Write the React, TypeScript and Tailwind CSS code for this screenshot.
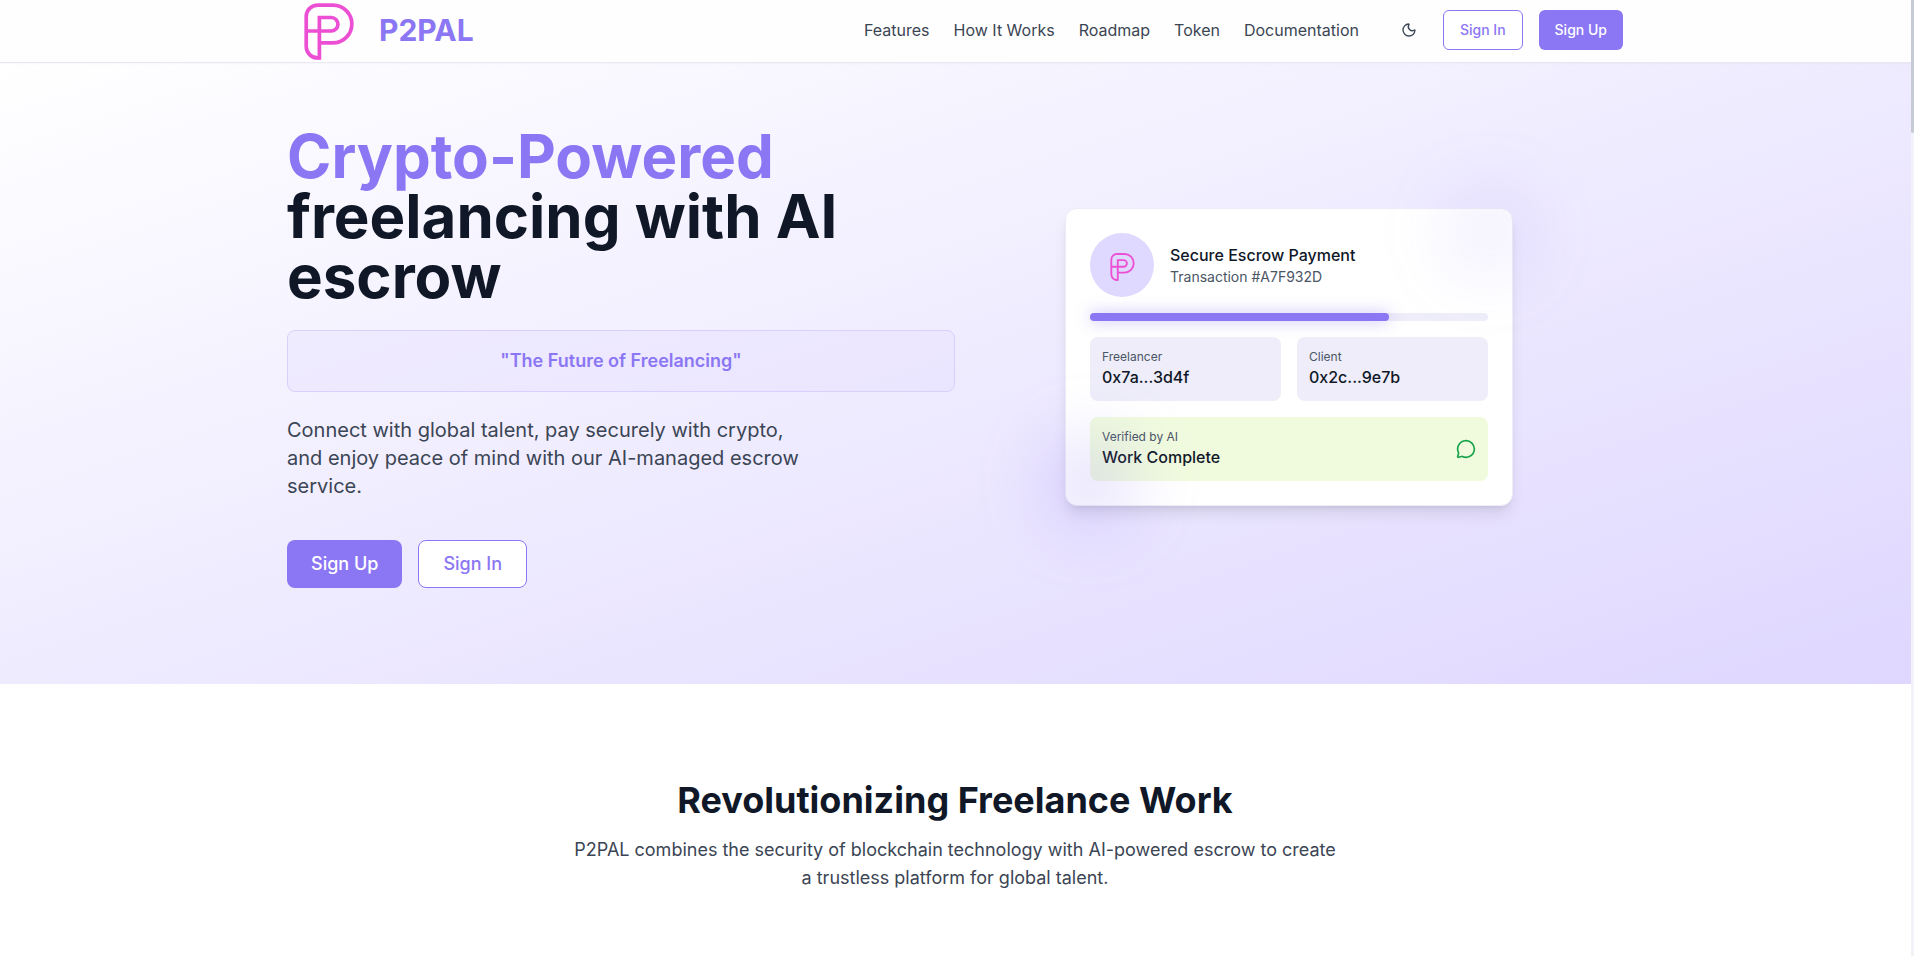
import { MessageCircle, Moon } from "lucide-react";

const navItems = ["Features", "How It Works", "Roadmap", "Token", "Documentation"];

const parties = [
  { label: "Freelancer", value: "0x7a...3d4f" },
  { label: "Client", value: "0x2c...9e7b" },
];

function Logo({ className, stroke = 11 }: { className: string; stroke?: number }) {
  return (
    <svg viewBox="104 12 147 169" className={className} fill="none" stroke="#ec4fd3" strokeWidth={stroke}>
      <path d="M149 130.500H189A56 56 0 0 0 189 18H144A34 34 0 0 0 110 52V141A34 34 0 0 0 144 175H149" />
      <path d="M149 180V55H184A20 20 0 0 1 184 95H110" />
    </svg>
  );
}

function Header() {
  return (
    <header className="relative z-10 h-[63px] shrink-0 border-b border-[#e9e7f1] bg-[#fefefe] shadow-[0_1px_2px_rgba(0,0,0,0.03)]">
      <div className="mx-auto flex h-[60px] w-[1401px] items-center justify-between pl-8 pr-[33px]">
        <div className="flex items-center pl-[17px]">
          <Logo className="mt-[3px] h-[57px] w-[50px]" />
          <span className="ml-[25px] text-3xl font-bold text-[#8b76f4]">P2PAL</span>
        </div>
        <div className="flex items-center">
          <nav className="flex gap-6 text-base text-[#3b4554]">
            {navItems.map((item) => (
              <a key={item}>{item}</a>
            ))}
          </nav>
          <Moon className="ml-[42px] size-4 text-[#3b4554]" />
          <button className="ml-[26px] h-10 rounded-md border border-[#8b76f4] bg-white px-4 text-sm font-medium text-[#8b76f4]">
            Sign In
          </button>
          <button className="ml-4 h-10 rounded-md bg-[#8b76f4] px-4 text-sm font-medium text-white">Sign Up</button>
        </div>
      </div>
    </header>
  );
}

function EscrowCard() {
  return (
    <div className="relative w-[448px]">
      <div className="rounded-xl border border-[#eeecf6] bg-white p-6 shadow-lg">
        <div className="flex items-center gap-4">
          <div className="flex size-16 items-center justify-center rounded-full bg-[#dfd8ff]">
            <Logo className="ml-px mt-[3px] h-7 w-[25px]" />
          </div>
          <div>
            <p className="font-medium text-gray-900">Secure Escrow Payment</p>
            <p className="text-sm text-gray-600">Transaction #A7F932D</p>
          </div>
        </div>
        <div className="mt-4 h-2 rounded-full bg-[#eeedf9]">
          <div className="h-2 w-3/4 rounded-full bg-[#8b76f4] shadow-[0_0_15px_rgba(139,118,244,0.5)]" />
        </div>
        <div className="mt-4 grid grid-cols-2 gap-4">
          {parties.map((party) => (
            <div key={party.label} className="rounded-lg bg-[#eeedf9] p-3">
              <p className="text-xs text-gray-600">{party.label}</p>
              <p className="font-medium text-gray-900">{party.value}</p>
            </div>
          ))}
        </div>
        <div className="mt-4 flex items-center justify-between rounded-lg bg-[#f0fbde] p-3">
          <div>
            <p className="text-xs text-gray-600">Verified by AI</p>
            <p className="font-medium text-gray-900">Work Complete</p>
          </div>
          <MessageCircle className="size-5 text-[#16a34a]" />
        </div>
      </div>
      <div className="absolute -right-6 -top-6 size-24 rounded-full bg-[#8b76f4]/10 blur-[32px]" />
      <div className="absolute -bottom-6 -left-6 size-24 rounded-full bg-[#8b76f4]/20 blur-[32px]" />
    </div>
  );
}

function Hero() {
  return (
    <section className="h-[621px] shrink-0 bg-gradient-to-br from-white to-[#dfd7ff] pt-[63px]">
      <div className="mx-auto grid w-[1401px] grid-cols-2 items-center pl-8 pr-[33px]">
        <div>
          <h1 className="text-6xl font-bold leading-none text-gray-900">
            <span className="text-[#8b76f4]">Crypto-Powered</span>
            <br />
            freelancing with AI escrow
          </h1>
          <div className="mt-6 rounded-lg border border-[#d9d1fb] bg-[#e5deff]/40 p-4 text-center text-lg font-semibold text-[#8b76f4]">
            "The Future of Freelancing"
          </div>
          <p className="mt-6 max-w-[530px] text-xl leading-7 text-[#3b4554]">
            Connect with global talent, pay securely with crypto, and enjoy peace of mind with our AI-managed escrow
            service.
          </p>
          <div className="mt-10 flex gap-4 text-lg font-medium">
            <button className="h-12 rounded-lg bg-[#8b76f4] px-6 text-white">Sign Up</button>
            <button className="h-12 rounded-lg border border-[#8b76f4] bg-white px-6 text-[#8b76f4]">Sign In</button>
          </div>
        </div>
        <div className="flex justify-center">
          <EscrowCard />
        </div>
      </div>
    </section>
  );
}

export default function App() {
  return (
    <div className="flex h-[956px] overflow-hidden bg-white font-['Inter',sans-serif]">
      <div className="flex min-w-0 flex-1 flex-col">
        <Header />
        <Hero />
        <section className="flex flex-1 flex-col items-center pr-px pt-24 text-center">
          <h2 className="text-4xl font-bold text-gray-900">Revolutionizing Freelance Work</h2>
          <p className="mt-4 max-w-3xl text-lg leading-7 text-[#3b4554]">
            P2PAL combines the security of blockchain technology with AI-powered escrow to create a trustless platform
            for global talent.
          </p>
        </section>
      </div>
      <div className="w-[3px] bg-[#f3f2f8]">
        <div className="h-[133px] rounded-b bg-[#c6cbd5]" />
      </div>
    </div>
  );
}
